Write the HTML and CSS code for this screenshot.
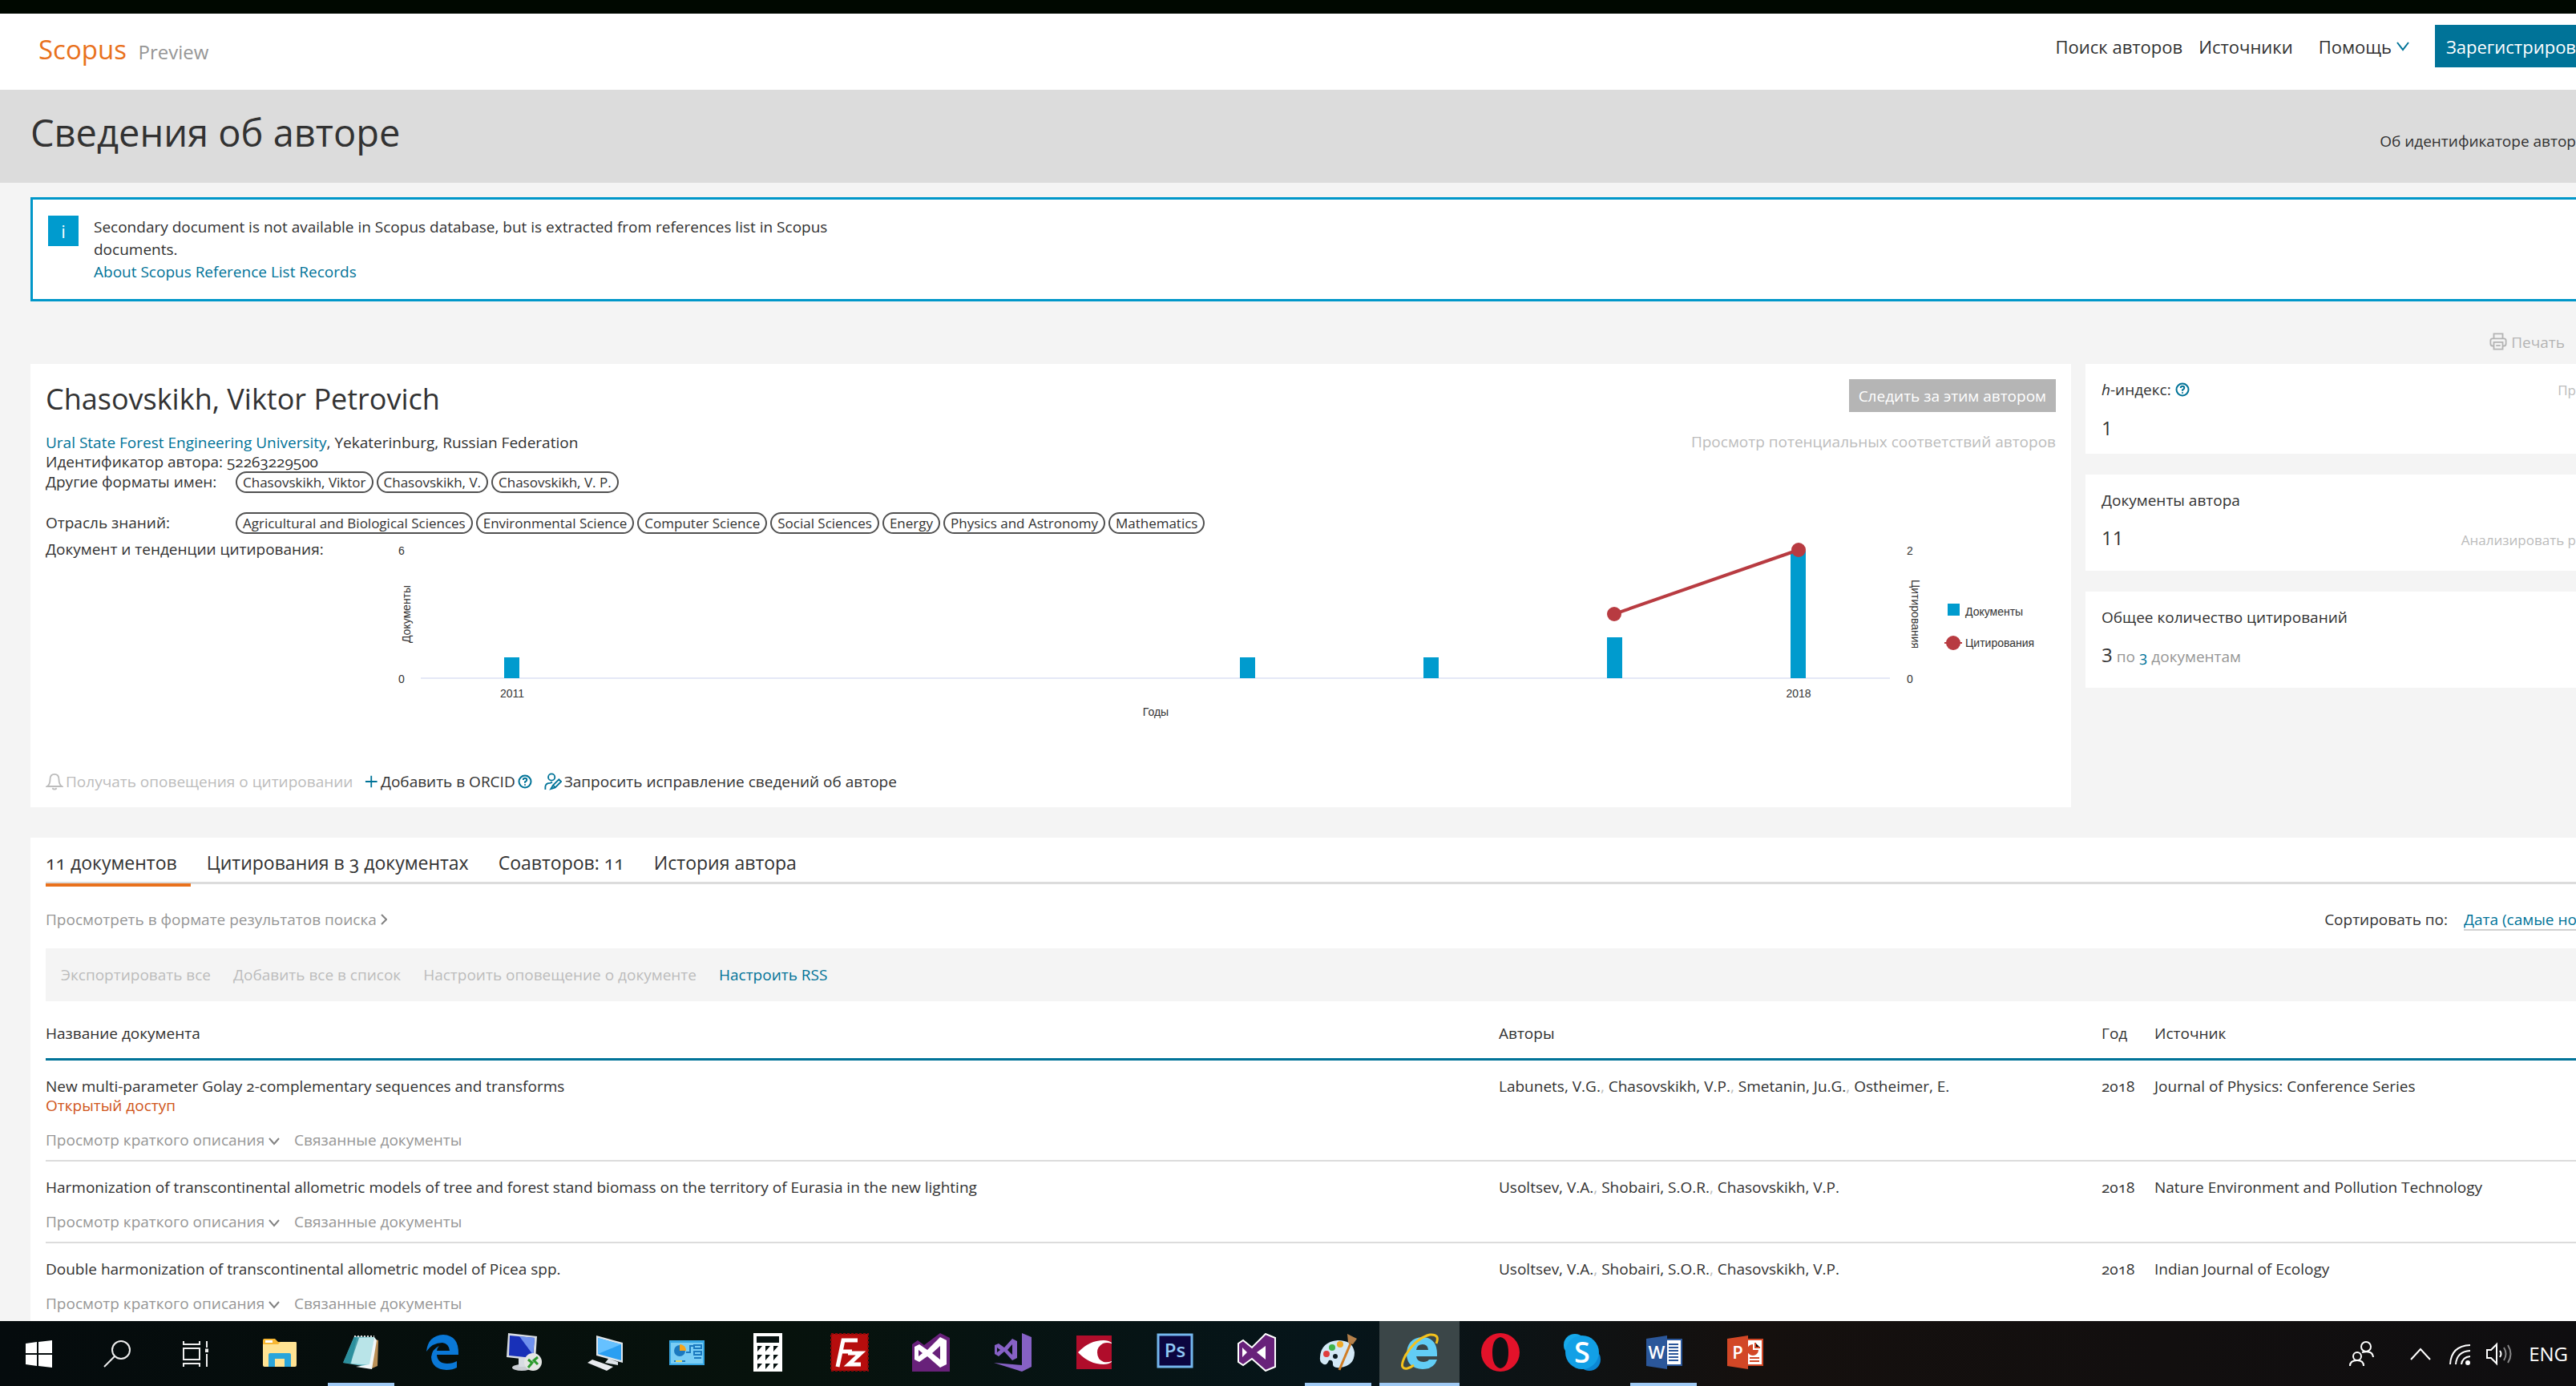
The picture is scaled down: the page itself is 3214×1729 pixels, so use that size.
FILE: index.html
```html
<!DOCTYPE html>
<html lang="ru">
<head>
<meta charset="UTF-8">
<meta name="viewport" content="width=device-width, initial-scale=1.0">
<title>Scopus Preview - Сведения об авторе</title>
<link rel="stylesheet" href="styles.css">
</head>
<body>
<div class="page">
  <header class="site-header">
    <a class="logo" href="#">Scopus <span class="logo-sub">Preview</span></a>
    <nav class="site-nav">
      <a href="#">Поиск авторов</a>
      <a href="#">Источники</a>
      <a class="help" href="#">Помощь
        <svg class="chevron" viewBox="0 0 16 12"><path d="M1 1 L8 10 L15 1"/></svg>
      </a>
      <button type="button" class="register">Зарегистриров</button>
    </nav>
  </header>

  <div class="title-band">
    <h1>Сведения об авторе</h1>
    <a href="#">Об идентификаторе автор</a>
  </div>

  <main>
    <div class="notice">
      <span class="notice-icon">i</span>
      <div class="notice-text">
        Secondary document is not available in Scopus database, but is extracted from references list in Scopus documents.<br>
        <a class="link" href="#">About Scopus Reference List Records</a>
      </div>
    </div>

    <div class="print">
      <svg class="icon" viewBox="0 0 24 24"><path d="M6 8 V1.500 H18 V8 M6 18 H4 Q1.500 18 1.500 15 V11 Q1.500 8 4 8 H20 Q22.500 8 22.500 11 V15 Q22.500 18 20 18 H18 M6 13 H18 V22.500 H6 Z M9 17.500 H15"/></svg>
      <span>Печать</span>
    </div>

    <div class="profile">
      <section class="card author">
        <div class="author-top">
          <div>
            <h2>Chasovskikh, Viktor Petrovich</h2>
            <div><a class="link" href="#">Ural State Forest Engineering University</a>, Yekaterinburg, Russian Federation</div>
            <div>Идентификатор автора: <span class="old">52263229500</span></div>
          </div>
          <div class="author-side">
            <button type="button" class="follow" disabled>Следить за этим автором</button>
            <span class="muted">Просмотр потенциальных соответствий авторов</span>
          </div>
        </div>
        <div class="tag-row">
          <span class="tag-label">Другие форматы имен:</span>
          <span class="tag">Chasovskikh, Viktor</span>
          <span class="tag">Chasovskikh, V.</span>
          <span class="tag">Chasovskikh, V. P.</span>
        </div>
        <div class="tag-row">
          <span class="tag-label">Отрасль знаний:</span>
          <span class="tag">Agricultural and Biological Sciences</span>
          <span class="tag">Environmental Science</span>
          <span class="tag">Computer Science</span>
          <span class="tag">Social Sciences</span>
          <span class="tag">Energy</span>
          <span class="tag">Physics and Astronomy</span>
          <span class="tag">Mathematics</span>
        </div>
        <div class="trend">
          <span class="trend-label">Документ и тенденции цитирования:</span>
          <svg class="chart" viewBox="0 0 2080 240" width="2080" height="240">
            <path class="axis" d="M45 173 H1878"/>
            <g class="bar">
              <rect x="149" y="147" width="19" height="26"/>
              <rect x="1067" y="147" width="19" height="26"/>
              <rect x="1296" y="147" width="19" height="26"/>
              <rect x="1525" y="122" width="19" height="51"/>
              <rect x="1754" y="14" width="19" height="159"/>
              <rect x="1950" y="80" width="15" height="15"/>
            </g>
            <path class="cite-line" d="M1534 93 L1764 13"/>
            <g class="cite">
              <circle cx="1534" cy="93" r="9"/>
              <circle cx="1764" cy="13" r="9"/>
              <circle cx="1957" cy="129" r="9"/>
            </g>
            <path class="cite-line thin" d="M1946 129 H1968"/>
            <text x="21" y="19" text-anchor="middle">6</text>
            <text x="21" y="179" text-anchor="middle">0</text>
            <text x="1903" y="19" text-anchor="middle">2</text>
            <text x="1903" y="179" text-anchor="middle">0</text>
            <text x="159" y="197" text-anchor="middle">2011</text>
            <text x="1764" y="197" text-anchor="middle">2018</text>
            <text x="962" y="220" text-anchor="middle">Годы</text>
            <text transform="translate(32 93) rotate(-90)" text-anchor="middle">Документы</text>
            <text transform="translate(1905 93) rotate(90)" text-anchor="middle">Цитирования</text>
            <text x="1972" y="95">Документы</text>
            <text x="1972" y="134">Цитирования</text>
          </svg>
        </div>
        <div class="actions">
          <span class="action muted">
            <svg class="icon" viewBox="0 0 24 24"><path d="M2 18.500 H22 Q18 16 18 9 Q18 2 12 2 Q6 2 6 9 Q6 16 2 18.500 Z M9 21 Q12 24 15 21"/></svg>
            Получать оповещения о цитировании
          </span>
          <a class="action" href="#">
            <svg class="icon teal" viewBox="0 0 18 24"><path d="M1 12 H17 M9 4 V20"/></svg>
            Добавить в ORCID
            <svg class="help-icon" viewBox="0 0 18 18"><circle cx="9" cy="9" r="7.500"/><path d="M6.800 7 Q6.800 4.800 9 4.800 Q11.300 4.800 11.300 7 Q11.300 8.300 9 9.500 V10.800 M9 12.200 V13.800"/></svg>
          </a>
          <a class="action" href="#">
            <svg class="icon teal" viewBox="0 0 24 24"><circle cx="10" cy="6" r="4.500"/><path d="M1.500 23 V19 Q2 14 8 14 L11 13 M9 22 L12 17 L20 9 L23 12 L15 20 Z M12 17 L15 20"/></svg>
            Запросить исправление сведений об авторе
          </a>
        </div>
      </section>

      <aside class="metrics">
        <section class="card metric">
          <div class="metric-row"><span class="metric-name"><span><i>h</i>-индекс:</span>
            <svg class="help-icon" viewBox="0 0 18 18"><circle cx="9" cy="9" r="7.500"/><path d="M6.800 7 Q6.800 4.800 9 4.800 Q11.300 4.800 11.300 7 Q11.300 8.300 9 9.500 V10.800 M9 12.200 V13.800"/></svg></span>
            <span class="muted more">Пр</span>
          </div>
          <div class="metric-row"><b>1</b></div>
        </section>
        <section class="card metric tall">
          <div class="metric-row">Документы автора</div>
          <div class="metric-row"><b>11</b><span class="muted more">Анализировать р</span></div>
        </section>
        <section class="card metric tall">
          <div class="metric-row">Общее количество цитирований</div>
          <div class="metric-row cites"><b>3</b><span class="dim">по</span><a class="link old" href="#">3</a><span class="dim">документам</span></div>
        </section>
      </aside>
    </div>

    <section class="card documents">
      <nav class="tabs">
        <a class="tab active" href="#">11 документов</a>
        <a class="tab" href="#">Цитирования в 3 документах</a>
        <a class="tab" href="#">Соавторов: 11</a>
        <a class="tab" href="#">История автора</a>
      </nav>
      <div class="results-bar">
        <a class="dim" href="#">Просмотреть в формате результатов поиска
          <svg class="arrow" viewBox="0 0 8 14"><path d="M1 1 L7 7 L1 13"/></svg></a>
        <div class="sort">
          <label for="sort">Сортировать по:</label>
          <select id="sort"><option>Дата (самые но</option></select>
        </div>
      </div>
      <div class="toolbar">
        <span>Экспортировать все</span>
        <span>Добавить все в список</span>
        <span>Настроить оповещение о документе</span>
        <a class="link" href="#">Настроить RSS</a>
      </div>
      <table class="docs">
        <colgroup><col><col class="col-authors"><col class="col-year"><col class="col-source"></colgroup>
        <thead>
          <tr><th>Название документа</th><th>Авторы</th><th>Год</th><th>Источник</th></tr>
        </thead>
        <tbody>
          <tr>
            <td>New multi-parameter Golay <span class="old">2</span>-complementary sequences and transforms
              <div class="open">Открытый доступ</div>
              <div class="doc-links"><a href="#">Просмотр краткого описания <svg class="arrow down" viewBox="0 0 14 10"><path d="M1 1 L7 8 L13 1"/></svg></a><a href="#">Связанные документы</a></div>
            </td>
            <td>Labunets, V.G.<i class="sep">,</i> Chasovskikh, V.P.<i class="sep">,</i> Smetanin, Ju.G.<i class="sep">,</i> Ostheimer, E.</td>
            <td class="old">2018</td>
            <td>Journal of Physics: Conference Series</td>
          </tr>
          <tr>
            <td>Harmonization of transcontinental allometric models of tree and forest stand biomass on the territory of Eurasia in the new lighting
              <div class="doc-links"><a href="#">Просмотр краткого описания <svg class="arrow down" viewBox="0 0 14 10"><path d="M1 1 L7 8 L13 1"/></svg></a><a href="#">Связанные документы</a></div>
            </td>
            <td>Usoltsev, V.A.<i class="sep">,</i> Shobairi, S.O.R.<i class="sep">,</i> Chasovskikh, V.P.</td>
            <td class="old">2018</td>
            <td>Nature Environment and Pollution Technology</td>
          </tr>
          <tr>
            <td>Double harmonization of transcontinental allometric model of Picea spp.
              <div class="doc-links"><a href="#">Просмотр краткого описания <svg class="arrow down" viewBox="0 0 14 10"><path d="M1 1 L7 8 L13 1"/></svg></a><a href="#">Связанные документы</a></div>
            </td>
            <td>Usoltsev, V.A.<i class="sep">,</i> Shobairi, S.O.R.<i class="sep">,</i> Chasovskikh, V.P.</td>
            <td class="old">2018</td>
            <td>Indian Journal of Ecology</td>
          </tr>
        </tbody>
      </table>
    </section>
  </main>
</div>

<footer class="taskbar">
  <div class="system">
    <!-- start -->
    <svg viewBox="0 0 48 48"><path fill="#fff" d="M8 11 L22 9 V23 H8 Z M24 9 L41 7 V23 H24 Z M8 25 H22 V39 L8 37 Z M24 25 H41 V41 L24 39 Z"/></svg>
    <!-- search -->
    <svg viewBox="0 0 48 48" fill="none" stroke="#eee" stroke-width="2"><circle cx="29" cy="19" r="11"/><path d="M21 27 L8 40"/></svg>
    <!-- task view -->
    <svg viewBox="0 0 48 48" fill="none" stroke="#eee" stroke-width="2"><path d="M9 8 V12 H29 V8 M9 17 H29 V31 H9 Z M9 40 V36 H29 V40 M38 8 V16 M38 24 V40"/><path fill="#fff" d="M37 18.500 H39 V21 H37 Z"/></svg>
  </div>
  <div class="apps">
    <span class="app"><svg viewBox="0 0 48 48"><path fill="#f7b733" d="M3 9 Q3 7 5 7 H18 L22 11 H43 Q45 11 45 13 V40 H3 Z"/><path fill="#ffe393" d="M3 14 H22 L25 11 H44 Q45 11 45 13 V40 Q45 42 43 42 H5 Q3 42 3 40 Z"/><path fill="#fff" d="M6 9 H15 V12 H6 Z"/><path fill="#2ba5db" d="M10 42 V27 Q10 25 12 25 H36 Q38 25 38 27 V42 H30 V32 H18 V42 Z"/></svg></span>
    <span class="app open-app"><svg viewBox="0 0 48 48"><path fill="#b98f56" d="M36 6 L46 9 L45 41 L38 44 Z"/><path fill="#5fb3bf" d="M16 4 L41 5 L38 43 L2 37 Z"/><path fill="#b9e4e8" d="M19 6 L41 5 L36 40 L12 38 Z"/><path fill="#f2f7f8" d="M41 5 L44 9 L38 45 L18 42 L35 39 Z"/><path fill="#16808e" opacity=".7" d="M16 5 L22 6 L11 38 L2 37 Z"/><path stroke="#ddd" stroke-width="2" stroke-dasharray="2 2" d="M16 4 H41"/></svg></span>
    <span class="app"><svg viewBox="0 0 48 48"><path fill="#0a78d7" d="M4 23 Q6 3 25 2 Q45 3 44 27 H17 Q18 38 30 38 Q37 38 42 35 V43 Q37 46 29 46 Q11 45 10 30 Q11 20 20 16 Q17 19 17 22 H33 Q32 13 24 12 Q11 12 4 23 Z"/></svg></span>
    <span class="app"><svg viewBox="0 0 48 48"><ellipse cx="21" cy="43" rx="12" ry="4" fill="#c9cdd2"/><path fill="#d7dce2" d="M4 0 L40 4 L38 34 L2 30 Z M17 31 H27 V42 H17 Z"/><path fill="#1830b8" d="M6 3 L37 6 L35 31 L5 28 Z"/><path fill="#6f91ee" d="M18 4 L37 6 L35 27 Z"/><circle cx="35" cy="36" r="11" fill="#e4e6e4"/><path fill="none" stroke="#2c9a2c" stroke-width="3" d="M29 33 L34 37 L29 43 M41 30 L36 34 L41 39"/></svg></span>
    <span class="app"><svg viewBox="0 0 48 48"><path fill="#dfe5ea" d="M13 3 L46 12 V37 L13 28 Z M28 32 L40 36 V40 L24 37 Z"/><path fill="#2b9ff2" d="M15 6 L44 14 V34 L15 26 Z"/><path fill="#66c1ff" d="M15 6 L44 14 L15 26 Z"/><path fill="#e9ecef" d="M8 33 L34 42 L26 47 L2 37 Z"/></svg></span>
    <span class="app"><svg viewBox="0 0 48 48"><rect x="2" y="9" width="44" height="31" fill="#37a7e4"/><rect x="4" y="12" width="40" height="26" fill="#79cdf5"/><circle cx="15" cy="22" r="7" fill="#1b79bf"/><path fill="#f6a41c" d="M15 22 V14 A8 8 0 0 1 23 22 Z"/><path fill="none" stroke="#1b79bf" stroke-width="2" d="M23 24 H28 V16 H33 M33 15 H42 V19 H33 Z M33 23 H42 V27 H33 Z M33 31 H42 M8 35 H22"/><path stroke="#e6d35a" stroke-width="2" d="M10 35 H18"/></svg></span>
    <span class="app"><svg viewBox="0 0 48 48"><path fill="#fff" d="M6 0 H42 V48 H6 Z"/><path fill="#071211" d="M10 4 H38 V12 H10 Z M11 16 H17 L11 23 Z M21 16 H27 L21 23 Z M31 16 H37 L31 23 Z M11 27 H17 L11 34 Z M21 27 H27 L21 34 Z M31 27 H37 L31 34 Z M11 38 H17 L11 45 Z M21 38 H27 L21 45 Z M31 38 H37 L31 45 Z"/></svg></span>
    <span class="app"><svg viewBox="0 0 48 48"><rect x="1" y="1" width="46" height="46" fill="#b60d0d" stroke="#8e0909" stroke-width="2" stroke-dasharray="3 2"/><path fill="none" stroke="#fff" stroke-width="5" d="M34 9 H16 L9 42 M12 23 H27 M22 25 H38 L23 39 H38"/></svg></span>
    <span class="app"><svg viewBox="0 0 48 48"><path fill="#68217a" d="M1 14 L8 9 L16 15 L36 0 L48 6 V48 H1 Z"/><path fill="#fff" fill-rule="evenodd" d="M4 17 L10 14 L20 21 L36 5 L44 9 V39 L36 43 L20 29 L10 36 L4 33 Z M9 21 V29 L14 25 Z M36 16 L26 25 L36 33 Z"/></svg></span>
    <span class="app"><svg viewBox="0 0 48 48"><path fill="#8661c5" d="M36 0 L48 5 V42 L36 48 L1 37 L36 40 Z"/><path fill="#8661c5" fill-rule="evenodd" d="M2 15 L7 13 L14 18 L24 7 L30 10 V31 L24 34 L14 23 L7 29 L2 26 Z M5 18 V24 L9 21 Z M24 14 L18 21 L24 27 Z"/></svg></span>
    <span class="app"><svg viewBox="0 0 48 48"><rect x="2" y="3" width="44" height="42" fill="#b00d2b"/><path fill="#fff" d="M4 24 Q18 9 36 9 Q42 9 46 12 V36 Q42 39 36 39 Q18 39 4 24 Z"/><path fill="#b00d2b" d="M46 13 Q40 11 35 13 Q28 17 28 24 Q28 33 36 36 Q41 37 46 35 Z"/></svg></span>
    <span class="app"><svg viewBox="0 0 48 48"><rect x="3" y="2" width="42" height="40" fill="#0b0540" stroke="#74b7ee" stroke-width="3"/><text class="glyph ps" x="24" y="30" text-anchor="middle">Ps</text></svg></span>
    <span class="app"><svg viewBox="0 0 48 48"><path fill="#68217a" stroke="#fff" stroke-width="2" fill-rule="evenodd" d="M1 13 L7 9 L18 18 L35 1 L47 6 V42 L35 47 L18 32 L7 40 L1 36 Z"/><path fill="#fff" d="M6 18 V30 L12 24 Z M35 16 L24 24 L35 33 Z"/></svg></span>
    <span class="app open-app"><svg viewBox="0 0 48 48"><path fill="#d3e8f6" d="M2 30 Q3 11 24 9 Q43 9 45 24 Q45 41 27 43 Q17 44 18 38 Q18 33 13 34 Q10 42 5 38 Q1 35 2 30 Z"/><circle cx="21" cy="29" r="3" fill="#0b1a20"/><circle cx="10" cy="26" r="4" fill="#e03d3d"/><circle cx="17" cy="18" r="4" fill="#3fb34a"/><circle cx="27" cy="14" r="4" fill="#f0a928"/><path stroke="#d17d25" stroke-width="3" d="M40 13 L26 46"/><path fill="#b5804a" d="M36 1 L48 7 L43 14 L37 12 Z"/></svg></span>
    <span class="app current"><svg viewBox="0 0 48 48"><path fill="#62cdf5" fill-rule="evenodd" d="M8 27 Q8 6 28 5 Q47 6 46 29 H20 Q21 36 29 36 Q34 36 36 33 H46 Q42 45 28 45 Q9 44 8 27 Z M20 21 H35 Q34 14 28 14 Q21 14 20 21 Z"/><path fill="none" stroke="#f4c11c" stroke-width="3" d="M45 13 Q50 1 37 2 Q20 6 7 27 Q-3 46 9 44 Q13 43 17 40"/></svg></span>
    <span class="app"><svg viewBox="0 0 48 48"><path fill="#e3122a" fill-rule="evenodd" d="M24 0 A24 24 0 1 0 24 48 A24 24 0 1 0 24 0 Z M24 5 Q34 7 34 24 Q34 42 24 44 Q14 42 14 24 Q14 7 24 5 Z"/></svg></span>
    <span class="app"><svg viewBox="0 0 48 48"><circle cx="15" cy="15" r="14" fill="#17a9ea"/><circle cx="33" cy="33" r="14" fill="#0b86d3"/><circle cx="24" cy="24" r="21" fill="#12a0e6"/><text class="glyph skype" x="24" y="37" text-anchor="middle">S</text></svg></span>
    <span class="app open-app"><svg viewBox="0 0 48 48"><rect x="24" y="8" width="22" height="32" fill="#fff" stroke="#2b579a" stroke-width="2"/><path stroke="#2b579a" stroke-width="2" d="M30 14 H42 M30 18 H42 M30 22 H42 M30 26 H42 M30 30 H42 M30 34 H42"/><path fill="#2b579a" d="M2 7 L28 3 V45 L2 41 Z"/><text class="glyph office" x="15" y="32" text-anchor="middle">W</text></svg></span>
    <span class="app"><svg viewBox="0 0 48 48"><rect x="24" y="8" width="22" height="32" fill="#fff" stroke="#d24726" stroke-width="2"/><path fill="#d24726" d="M34 14 A7 7 0 1 0 41 21 H34 Z"/><path stroke="#d24726" stroke-width="2" d="M30 31 H42 M30 35 H42 M37 12 V18 H43"/><path fill="#d24726" d="M2 7 L28 3 V45 L2 41 Z"/><text class="glyph office" x="15" y="32" text-anchor="middle">P</text></svg></span>
  </div>
  <div class="tray">
    <svg class="people" viewBox="0 0 32 32"><circle cx="21" cy="7" r="6"/><circle cx="10" cy="19" r="5"/><path d="M1 31 Q1 24 10 24 Q18 24 18 31 M16 14 Q29 11 30 20"/></svg>
    <svg class="up" viewBox="0 0 26 32"><path d="M1 23 L13 10 L25 23"/></svg>
    <svg viewBox="0 0 30 32"><path d="M2 29 Q3 6 27 5 M9 29 Q10 13 27 12 M16 29 Q17 20 27 19"/><circle class="solid" cx="24" cy="27" r="2"/></svg>
    <svg viewBox="0 0 34 32"><path d="M2 11 H7 L14 4 V28 L7 21 H2 Z M18 12 Q21 16 18 20"/><path opacity=".5" d="M23 8 Q28 16 23 24 M28 5 Q35 16 28 27"/></svg>
    <span class="lang">ENG</span>
  </div>
</footer>
</body>
</html>
```
FILE: styles.css
```css
* {
  box-sizing: border-box;
}
body {
  margin: 0;
  height: 100vh;
  display: flex;
  flex-direction: column;
  overflow: hidden;
  background: #f4f4f4;
  color: #323232;
  font-family: "Open Sans", "Noto Sans", sans-serif;
  font-size: 19px;
  line-height: 24px;
}
a {
  color: inherit;
  text-decoration: none;
}
h1, h2 {
  margin: 0;
  font-weight: 400;
}
button, select {
  font: inherit;
  border: none;
  border-radius: 0;
}
svg {
  flex: none;
}
.link {
  color: #007398;
}
.muted {
  color: #bcbcbc;
}
.dim {
  color: #969696;
}
.old {
  font-variant-numeric: oldstyle-nums;
}
.card {
  background: #fff;
}

/* page shell */
.page {
  flex: 1;
  min-height: 0;
  overflow: hidden;
  border-top: 17px solid #000800;
}
.site-header {
  display: flex;
  justify-content: space-between;
  height: 95px;
  padding: 14px 0 0 48px;
  background: #fff;
}
.logo {
  color: #e9711c;
  font-size: 33px;
  line-height: 61px;
}
.logo-sub {
  margin-left: 6px;
  color: #969696;
  font-size: 24px;
}
.site-nav {
  display: flex;
  align-items: flex-start;
  gap: 20px;
  font-size: 22px;
  line-height: 54px;
}
.help {
  display: flex;
  align-items: center;
  gap: 6px;
  margin: 0 12px;
}
.chevron {
  width: 16px;
  fill: none;
  stroke: #007398;
  stroke-width: 2;
}
.register {
  width: 176px;
  height: 53px;
  padding: 0 0 0 14px;
  background: #007398;
  color: #fff;
  text-align: left;
  overflow: hidden;
}
.title-band {
  display: flex;
  justify-content: space-between;
  align-items: baseline;
  height: 116px;
  padding-left: 38px;
  background: #dcdcdc;
}
.title-band h1 {
  font-size: 47px;
  line-height: 106px;
}
main {
  padding-left: 38px;
}

/* info message */
.notice {
  display: flex;
  gap: 19px;
  height: 130px;
  margin-top: 18px;
  padding: 20px 19px 0;
  background: #fff;
  border: 3px solid #0097c9;
  border-right: none;
}
.notice-icon {
  width: 38px;
  height: 38px;
  background: #009bce;
  color: #fff;
  text-align: center;
  line-height: 38px;
  font-size: 22px;
}
.notice-text {
  max-width: 940px;
  line-height: 28px;
}
.print {
  display: flex;
  justify-content: flex-end;
  gap: 5px;
  padding: 39px 14px 15px 0;
  color: #b4b4b4;
}
.icon {
  height: 22px;
  fill: none;
  stroke: currentColor;
  stroke-width: 2;
}
.teal {
  stroke: #007398;
}

/* author profile */
.profile {
  display: grid;
  grid-template-columns: 1fr 612px;
  gap: 18px;
  align-items: start;
}
.author {
  padding: 19px 19px 17px;
}
.author-top {
  display: flex;
  justify-content: space-between;
}
.author h2 {
  margin-bottom: 17px;
  font-size: 36px;
  line-height: 50px;
}
.author-side {
  display: flex;
  flex-direction: column;
  align-items: flex-end;
  gap: 25px;
}
.follow {
  height: 41px;
  padding: 0 12px;
  background: #b5b5b5;
  color: #fff;
}
.tag-row {
  display: flex;
  align-items: center;
  gap: 4px;
  height: 26px;
  margin-bottom: 25px;
}
.tag-row + .tag-row {
  margin-bottom: 8px;
}
.tag-label {
  width: 233px;
}
.tag {
  height: 27px;
  padding: 0 7px;
  border: 2px solid #505050;
  border-radius: 14px;
  font-size: 17px;
  line-height: 23px;
}
.trend {
  display: flex;
  margin-bottom: 47px;
}
.trend-label {
  width: 423px;
}
.chart {
  font-family: "Liberation Sans", Arial, sans-serif;
  font-size: 14px;
  fill: #333;
}
.axis {
  fill: none;
  stroke: #e4e8f6;
  stroke-width: 2;
}
.bar {
  fill: #009bce;
}
.cite {
  fill: #b83b41;
}
.cite-line {
  fill: none;
  stroke: #b83b41;
  stroke-width: 4;
}
.thin {
  stroke-width: 2;
}
.actions {
  display: flex;
  gap: 15px;
}
.action {
  display: flex;
  align-items: center;
  gap: 3px;
  line-height: 30px;
}
.help-icon {
  width: 18px;
  fill: none;
  stroke: #007398;
  stroke-width: 2;
}

/* metrics column */
.metrics {
  display: grid;
  gap: 26px;
}
.metric {
  height: 112px;
  padding: 20px 0 0 20px;
}
.tall {
  height: 120px;
}
.metric-row {
  display: flex;
  justify-content: space-between;
  align-items: baseline;
}
.metric-row + .metric-row {
  margin-top: 17px;
}
.metric-row b {
  font-size: 24px;
  font-weight: 400;
  line-height: 36px;
}
.metric-name {
  display: flex;
  align-items: center;
  gap: 5px;
}
.more {
  font-size: 17px;
}
.cites {
  justify-content: flex-start;
  gap: 5px;
}

/* documents */
.documents {
  margin-top: 38px;
  padding-left: 19px;
}
.tabs {
  display: flex;
  gap: 20px;
  border-bottom: 3px solid #dcdcdc;
}
.tab {
  padding: 15px 17px 8px 0;
  font-size: 23px;
  line-height: 32px;
  font-variant-numeric: oldstyle-nums;
}
.active {
  margin-bottom: -6px;
  border-bottom: 4px solid #e9711c;
}
.results-bar {
  display: flex;
  justify-content: space-between;
  padding: 32px 0 22px;
}
.arrow {
  width: 8px;
  fill: none;
  stroke: #828282;
  stroke-width: 2;
}
.down {
  width: 14px;
}
.sort {
  display: flex;
  gap: 20px;
}
.sort select {
  width: 140px;
  padding: 0;
  appearance: none;
  background: none;
  border-bottom: 2px solid #d0d0d0;
  color: #007398;
}
.toolbar {
  display: flex;
  align-items: center;
  gap: 28px;
  height: 66px;
  padding-left: 19px;
  background: #f4f4f4;
  color: #bcbcbc;
}
.docs {
  width: 100%;
  table-layout: fixed;
  border-collapse: separate;
  border-spacing: 0;
}
.col-authors {
  width: 752px;
}
.col-year {
  width: 66px;
}
.col-source {
  width: 526px;
}
.docs th {
  padding: 28px 0 19px;
  border-bottom: 3px solid #007398;
  font-weight: 400;
  text-align: left;
}
.docs td {
  padding: 20px 0 13px;
  border-bottom: 2px solid #dcdcdc;
  vertical-align: top;
}
.sep {
  color: #bcbcbc;
  font-style: normal;
}
.open {
  color: #d0551a;
}
.doc-links {
  display: flex;
  gap: 18px;
  margin-top: 19px;
  color: #969696;
}

/* taskbar */
.taskbar {
  display: flex;
  flex: none;
  height: 81px;
  background: linear-gradient(90deg, #050b0d, #07120c 30%, #06151a 52%, #15100e 68%, #0f0e10);
}
.system {
  display: flex;
  align-items: center;
  gap: 50px;
  width: 298px;
  padding-left: 24px;
}
.system svg, .app svg {
  width: 48px;
  height: 48px;
}
.apps {
  display: grid;
  grid-template-columns: repeat(19, 1fr);
  width: 1930px;
}
.app {
  display: flex;
  align-items: center;
  justify-content: center;
  margin: 0 9px;
  border-bottom: 4px solid transparent;
}
.open-app {
  border-color: #9fc9f3;
}
.current {
  margin: 0 1px;
  background: #3b4648;
  border-color: #9fc9f3;
}
.glyph {
  font-weight: 600;
  fill: #fff;
}
.ps {
  font-size: 24px;
  fill: #8fc8f5;
}
.skype {
  font-size: 36px;
}
.office {
  font-size: 22px;
}
.tray {
  display: flex;
  align-items: center;
  gap: 16px;
  margin-left: auto;
  padding-right: 10px;
}
.tray svg {
  height: 32px;
  fill: none;
  stroke: #fff;
  stroke-width: 2;
}
.tray .people {
  margin-right: 28px;
}
.tray .up {
  margin-right: 6px;
}
.tray .solid {
  fill: #fff;
}
.lang {
  margin-left: 4px;
  color: #fff;
  font-size: 24px;
}
```
